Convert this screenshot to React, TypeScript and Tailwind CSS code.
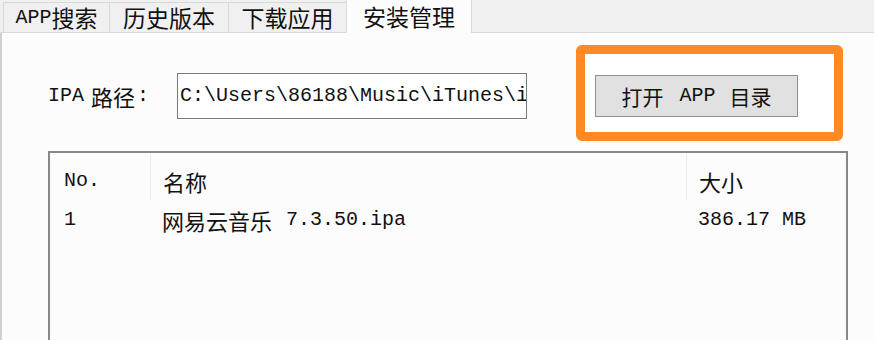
import type { ReactNode } from "react";

const cjk = "font-['Noto_Sans_CJK_SC',sans-serif]";
const mono = "font-['Liberation_Mono','Noto_Sans_CJK_SC',monospace]";

function M({ children, className = "" }: { children: ReactNode; className?: string }) {
  return <span className={`${mono} text-[20px] ${className}`}>{children}</span>;
}

const tabs = [
  { label: "APP搜索", w: "w-[107px]" },
  { label: "历史版本", w: "w-[120px]" },
  { label: "下载应用", w: "w-[119px]" },
];

function TabLabel({ text }: { text: string }) {
  if (text.startsWith("APP")) {
    return (
      <>
        <M>APP</M>
        <span>{text.slice(3)}</span>
      </>
    );
  }
  return <span>{text}</span>;
}

export default function App() {
  return (
    <div className={`w-[874px] h-[340px] overflow-hidden bg-[#f0f0f0] text-[#111] ${cjk} text-[22px] leading-none`}>
      {/* tab strip */}
      <div className="flex items-end h-[33px] pl-[3px] border-b border-[#d9d9d9] text-[23px]">
        {tabs.map((t) => (
          <div
            key={t.label}
            className={`${t.w} h-[30px] flex items-center justify-center border border-b-0 border-[#d9d9d9] bg-[#f0f0f0] -mr-px`}
          >
            <TabLabel text={t.label} />
          </div>
        ))}
        <div className="w-[126px] h-[33px] -mb-px flex items-center justify-center border-x border-[#d9d9d9] bg-[#fdfcfd] relative z-10 pb-[2px]">
          <span className="leading-[26px]">安装管理</span>
        </div>
      </div>

      {/* page */}
      <div className="h-[307px] bg-[#fdfcfd] border-l-2 border-[#cfcfcf]">
        <div className="flex items-start pt-[12px] pl-[46px]">
          <div className="w-[129px] mt-[28px] h-[46px] flex items-center">
            <M>IPA</M>
            <span className="ml-[7px]">路径</span>
            <M className="ml-[2px]">:</M>
          </div>
          <div className="w-[350px] h-[46px] mt-[28px] border border-[#7a7a7a] bg-white flex items-center pl-[2px] overflow-hidden whitespace-nowrap">
            <M>C:\Users\86188\Music\iTunes\i</M>
          </div>
          <div className="ml-[49px] w-[267px] h-[96px] border-[9px] border-[#ff8a24] rounded-[6px] bg-white pl-[10px] pt-[21px]">
            <div className="w-[203px] h-[42px] bg-[#e1e1e1] border border-[#8f8f8f] flex items-center justify-center text-[21px]">
              <span>打开</span>
              <M className="ml-[16px]">APP</M>
              <span className="ml-[14px]">目录</span>
            </div>
          </div>
        </div>

        {/* list */}
        <div className="ml-[46px] mt-[10px] w-[800px] h-[200px] border-2 border-b-0 border-[#888] bg-[#fdfcfd]">
          <div className="grid grid-cols-[100px_536px_1fr]">
            <div className="h-[47px] pt-[8px] pl-[14px] flex items-center">
              <M>No.</M>
            </div>
            <div className="h-[47px] pt-[8px] pl-[12px] flex items-center border-l border-[#ececec]">
              名称
            </div>
            <div className="h-[47px] pt-[8px] pl-[12px] flex items-center border-l border-[#ececec]">
              大小
            </div>

            <div className="h-[40px] pl-[14px] flex items-center">
              <M>1</M>
            </div>
            <div className="h-[40px] pl-[12px] flex items-center">
              <span>网易云音乐</span>
              <M className="ml-[14px]">7.3.50.ipa</M>
            </div>
            <div className="h-[40px] pl-[12px] flex items-center">
              <M>386.17 MB</M>
            </div>
          </div>
        </div>
      </div>
    </div>
  );
}
